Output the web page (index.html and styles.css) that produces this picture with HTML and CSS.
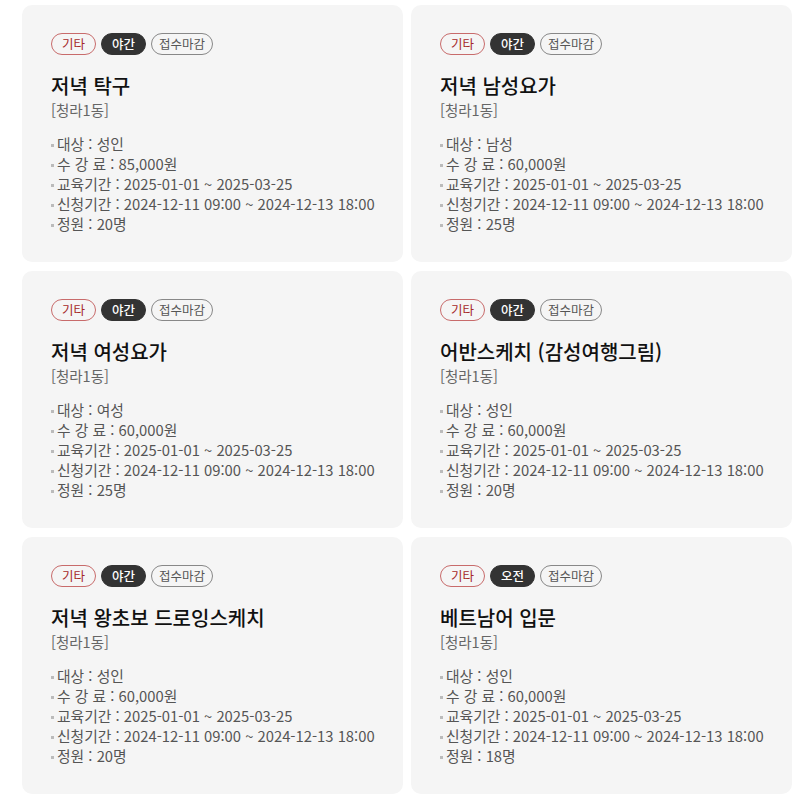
FILE: index.html
```html
<!DOCTYPE html>
<html lang="ko">

<head>
    <meta charset="UTF-8">
    <meta name="viewport" content="width=device-width, initial-scale=1.0">
    <title>강좌 목록</title>
    <link rel="stylesheet" href="styles.css">
</head>

<body>
    <ul class="lecture-list">
        <li class="lecture">
            <div class="badges">
                <span class="badge cate">기타</span>
                <span class="badge time">야간</span>
                <span class="badge state">접수마감</span>
            </div>
            <h3 class="title">저녁 탁구</h3>
            <p class="place">[청라1동]</p>
            <ul class="info">
                <li>대상 : 성인</li>
                <li>수 강 료 : 85,000원</li>
                <li>교육기간 : 2025-01-01 ~ 2025-03-25</li>
                <li>신청기간 : 2024-12-11 09:00 ~ 2024-12-13 18:00</li>
                <li>정원 : 20명</li>
            </ul>
        </li>
        <li class="lecture">
            <div class="badges">
                <span class="badge cate">기타</span>
                <span class="badge time">야간</span>
                <span class="badge state">접수마감</span>
            </div>
            <h3 class="title">저녁 남성요가</h3>
            <p class="place">[청라1동]</p>
            <ul class="info">
                <li>대상 : 남성</li>
                <li>수 강 료 : 60,000원</li>
                <li>교육기간 : 2025-01-01 ~ 2025-03-25</li>
                <li>신청기간 : 2024-12-11 09:00 ~ 2024-12-13 18:00</li>
                <li>정원 : 25명</li>
            </ul>
        </li>
        <li class="lecture">
            <div class="badges">
                <span class="badge cate">기타</span>
                <span class="badge time">야간</span>
                <span class="badge state">접수마감</span>
            </div>
            <h3 class="title">저녁 여성요가</h3>
            <p class="place">[청라1동]</p>
            <ul class="info">
                <li>대상 : 여성</li>
                <li>수 강 료 : 60,000원</li>
                <li>교육기간 : 2025-01-01 ~ 2025-03-25</li>
                <li>신청기간 : 2024-12-11 09:00 ~ 2024-12-13 18:00</li>
                <li>정원 : 25명</li>
            </ul>
        </li>
        <li class="lecture">
            <div class="badges">
                <span class="badge cate">기타</span>
                <span class="badge time">야간</span>
                <span class="badge state">접수마감</span>
            </div>
            <h3 class="title">어반스케치 (감성여행그림)</h3>
            <p class="place">[청라1동]</p>
            <ul class="info">
                <li>대상 : 성인</li>
                <li>수 강 료 : 60,000원</li>
                <li>교육기간 : 2025-01-01 ~ 2025-03-25</li>
                <li>신청기간 : 2024-12-11 09:00 ~ 2024-12-13 18:00</li>
                <li>정원 : 20명</li>
            </ul>
        </li>
        <li class="lecture">
            <div class="badges">
                <span class="badge cate">기타</span>
                <span class="badge time">야간</span>
                <span class="badge state">접수마감</span>
            </div>
            <h3 class="title">저녁 왕초보 드로잉스케치</h3>
            <p class="place">[청라1동]</p>
            <ul class="info">
                <li>대상 : 성인</li>
                <li>수 강 료 : 60,000원</li>
                <li>교육기간 : 2025-01-01 ~ 2025-03-25</li>
                <li>신청기간 : 2024-12-11 09:00 ~ 2024-12-13 18:00</li>
                <li>정원 : 20명</li>
            </ul>
        </li>
        <li class="lecture">
            <div class="badges">
                <span class="badge cate">기타</span>
                <span class="badge time">오전</span>
                <span class="badge state">접수마감</span>
            </div>
            <h3 class="title">베트남어 입문</h3>
            <p class="place">[청라1동]</p>
            <ul class="info">
                <li>대상 : 성인</li>
                <li>수 강 료 : 60,000원</li>
                <li>교육기간 : 2025-01-01 ~ 2025-03-25</li>
                <li>신청기간 : 2024-12-11 09:00 ~ 2024-12-13 18:00</li>
                <li>정원 : 18명</li>
            </ul>
        </li>
    </ul>
</body>

</html>
```

FILE: styles.css
```css
body {
    margin: 0;
    padding: 5px 8px 0 22px;
    font-family: "Noto Sans CJK KR", "Noto Sans", sans-serif;
    color: #555;
    background: #fff;
}

ul,
p,
h3 {
    margin: 0;
    padding: 0;
    list-style: none;
}

.lecture-list {
    display: grid;
    grid-template-columns: repeat(2, 1fr);
    gap: 9px 8px;
}

.lecture {
    background-color: #f5f5f5;
    border-radius: 10px;
    padding: 28px 20px 28px 29px;
    height: 257px;
    box-sizing: border-box;
}

.badges {
    display: flex;
    gap: 5px;
    height: 21px;
}

.badge {
    display: inline-flex;
    align-items: center;
    justify-content: center;
    height: 22px;
    box-sizing: border-box;
    padding: 0 10px;
    border-radius: 11px;
    font-size: 12.5px;
    line-height: 1;
    border: 1px solid transparent;
}

.badge.cate {
    border-color: #c86b6b;
    color: #a52a2a;
}

.badge.time {
    background-color: #333;
    border-color: #333;
    color: #fff;
    font-weight: 500;
}

.badge.state {
    padding: 0 7px;
    border-color: #888;
    color: #555;
}

.title {
    margin-top: 19px;
    font-size: 20px;
    line-height: 26px;
    font-weight: 500;
    color: #111;
}

.place {
    font-size: 14.5px;
    line-height: 22px;
    color: #666;
}

.info {
    margin-top: 13px;
}

.info li {
    font-size: 14.8px;
    line-height: 20px;
    color: #555;
    white-space: nowrap;
}

.info li::before {
    content: "";
    display: inline-block;
    width: 3px;
    height: 3px;
    margin-right: 3px;
    vertical-align: middle;
    background-color: #bbb;
}
```
